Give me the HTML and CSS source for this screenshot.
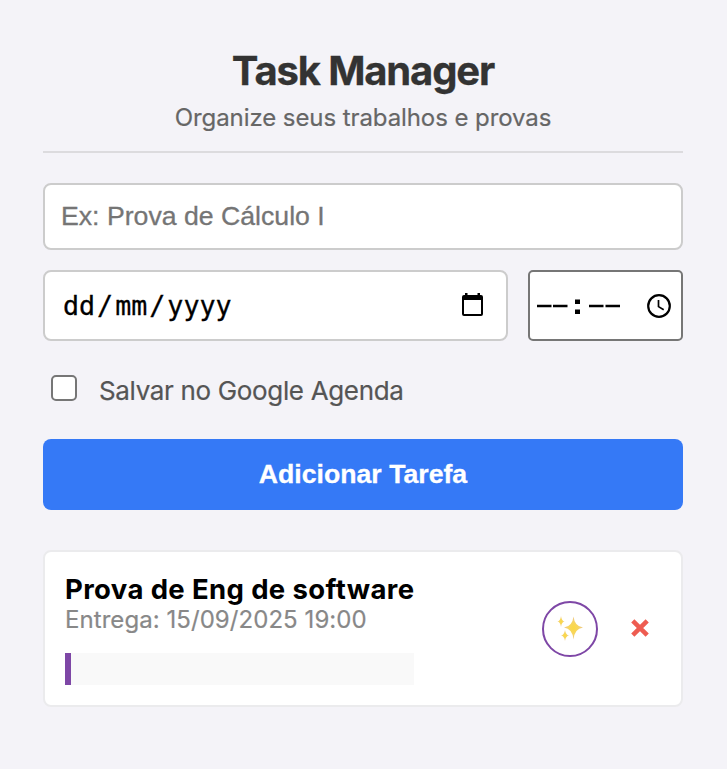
FILE: index.html
```html
<!DOCTYPE html>
<html lang="pt-BR">
<head>
<meta charset="utf-8">
<title>Task Manager</title>
<link rel="stylesheet" href="styles.css">
</head>
<body>
<main class="app">
  <header class="header">
    <h1 class="title">Task Manager</h1>
    <p class="subtitle">Organize seus trabalhos e provas</p>
  </header>
  <form class="form">
    <div class="field name-field"><span class="placeholder">Ex: Prova de Cálculo I</span></div>
    <div class="row">
      <div class="field date-field">
        <span class="mono"><span>dd</span><span class="slash">/</span><span>mm</span><span class="slash">/</span><span>yyyy</span></span>
        <svg class="calendar" width="21" height="23" viewBox="0 0 21 23"><path fill="#000" fill-rule="evenodd" d="M3 0h2.500v2h10V0H18v2h1a2 2 0 0 1 2 2v17a2 2 0 0 1-2 2H2a2 2 0 0 1-2-2V4a2 2 0 0 1 2-2h1zM2 7V21h17V7z"/></svg>
      </div>
      <div class="field time-field">
        <svg class="dashes" width="84" height="16" viewBox="0 0 84 16"><path d="M0 8h14.500M16 8h14.500M52 8h14.500M68.500 8H83" stroke="#000" stroke-width="2.4"/><path d="M38 1.500h5v4.500h-5zM38 11.500h5V16h-5z"/></svg>
        <svg class="clock" width="24" height="24" viewBox="0 0 24 24" fill="none" stroke="#000"><circle cx="12" cy="12" r="10.8" stroke-width="2.2"/><path d="M11.500 6v6.600l5.200 3.200" stroke-width="1.7"/></svg>
      </div>
    </div>
    <label class="check"><span class="box"></span><span class="check-label">Salvar no Google Agenda</span></label>
    <button class="submit" type="button">Adicionar Tarefa</button>
  </form>
  <section class="task">
    <div class="info">
      <strong class="task-name">Prova de Eng de software</strong>
      <span class="due">Entrega: 15/09/2025 19:00</span>
      <div class="plan"></div>
    </div>
    <div class="actions">
      <div class="spark">
        <svg width="26" height="26" viewBox="0 0 26 26"><defs><radialGradient id="gold"><stop offset="0" stop-color="#fcd940"/><stop offset=".55" stop-color="#f6d565"/><stop offset="1" stop-color="#ecc48c"/></radialGradient></defs><g fill="url(#gold)"><path d="M16.500 1.500Q17.600 11.400 26 12.500Q17.600 13.600 16.500 24.500Q15.400 13.600 7 12.500Q15.400 11.400 16.500 1.500Z"/><path d="M4 1Q4.600 5.900 7.500 6.500Q4.600 7.100 4 12Q3.400 7.100 .5 6.500Q3.400 5.900 4 1Z"/><path d="M8 15Q8.700 19.800 12 20.500Q8.700 21.200 8 26Q7.300 21.200 4 20.500Q7.300 19.800 8 15Z"/></g></svg>
      </div>
      <svg class="remove" width="18" height="18" viewBox="0 0 18 18"><path d="M1.800 1.800l14.400 14.400M16.200 1.800L1.800 16.200" stroke="#ee5c51" stroke-width="4.500"/></svg>
    </div>
  </section>
</main>
</body>
</html>
```
FILE: styles.css
```css
* { box-sizing: border-box; }
body { margin: 0; min-height: 769px; background: #f4f3f8; font-family: Inter, sans-serif; }
.app { width: 640px; margin-left: 43px; padding-top: 47px; }
.header { height: 106px; border-bottom: 2px solid #dcdbde; text-align: center; }
.title { margin: 0; color: #333; font-size: 40px; line-height: 48px; font-weight: 700; letter-spacing: -1.15px; -webkit-text-stroke: .3px #333; }
.subtitle { margin: 8px 0 0; color: #666; font-size: 24px; line-height: 30px; letter-spacing: -.08px; -webkit-text-stroke: .2px #666; }
.form { margin-top: 30px; }
.field { display: flex; align-items: center; background: #fff; border: 2px solid #ccc; border-radius: 8px; }
.name-field { height: 67px; padding: 0 16px 2px; }
.placeholder { color: #757575; font: 26.67px/32px "Liberation Sans", sans-serif; -webkit-text-stroke: .3px #757575; }
.row { display: flex; gap: 20px; margin-top: 20px; }
.date-field { width: 465px; height: 71px; padding: 0 23px 0 18px; justify-content: space-between; }
.mono { font: 26.67px/32px "DejaVu Sans Mono", monospace; color: #000; -webkit-text-stroke: .3px #000; }
.slash { padding: 0 2px; }
.calendar { display: block; margin-bottom: 2px; }
.time-field { width: 155px; padding: 0 10px 0 7px; justify-content: space-between; border-color: #767676; border-radius: 5px; }
.check { display: flex; align-items: center; height: 26px; margin-top: 34px; padding-left: 8px; }
.box { width: 26px; height: 26px; background: #fff; border: 2px solid #767676; border-radius: 5px; }
.check-label { margin: 6px 0 0 22px; color: #555; font-size: 26px; line-height: 32px; letter-spacing: -.34px; -webkit-text-stroke: .2px #555; }
.submit { display: block; width: 640px; height: 71px; margin-top: 38px; padding: 0 0 1px; border: 0; border-radius: 8px; background: #3579f6; color: #fff; font: bold 26.67px "Liberation Sans", sans-serif; -webkit-text-stroke: .3px #fff; }
.task { display: flex; justify-content: space-between; height: 157px; margin-top: 40px; padding: 22px 32px 20px 20px; background: #fff; border: 2px solid #ebebed; border-radius: 8px; }
.info { display: flex; flex-direction: column; width: 349px; white-space: nowrap; }
.task-name { font-size: 27.5px; line-height: 31px; letter-spacing: .37px; color: #000; }
.due { font-size: 24px; line-height: 30px; letter-spacing: .06px; color: #888; -webkit-text-stroke: .2px #888; }
.plan { height: 32px; margin-top: 18px; background: #f9f9f9; border-left: 6px solid #7e47a6; }
.actions { display: flex; align-items: center; gap: 33px; padding-bottom: 2px; }
.spark { display: flex; align-items: center; justify-content: center; width: 56px; height: 56px; border: 2px solid #7e47a6; border-radius: 50%; }
.spark svg { margin-bottom: 1px; }
.remove { margin-bottom: 2px; }
```
